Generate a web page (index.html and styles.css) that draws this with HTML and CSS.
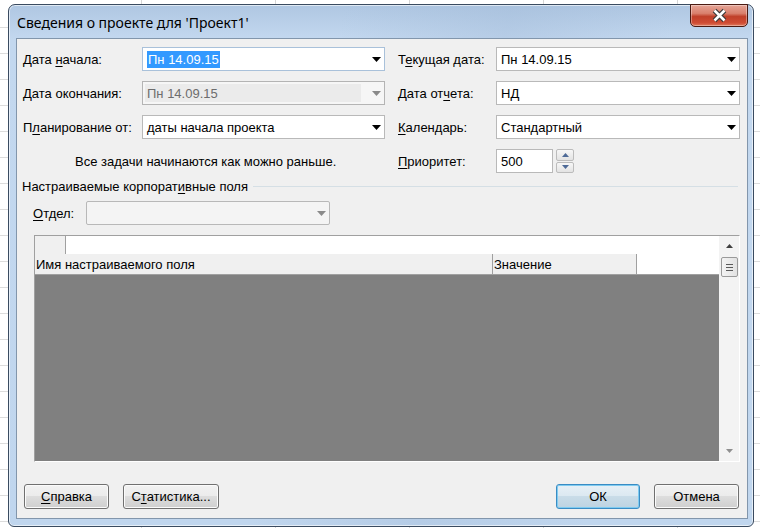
FILE: index.html
```html
<!DOCTYPE html>
<html lang="ru">
<head>
<meta charset="utf-8">
<title>Сведения о проекте</title>
<link rel="stylesheet" href="styles.css">
</head>
<body>
<div class="window">
  <div class="titlebar">
    <span class="title">Сведения о проекте для 'Проект1'</span>
    <button class="close" aria-label="Закрыть">
      <svg width="17" height="15" viewBox="0 0 17 15"><path d="M3.5 2.5 L13.5 12.5 M13.5 2.5 L3.5 12.5" stroke="#3a3a3a" stroke-width="5" fill="none"/><path d="M3.5 2.5 L13.5 12.5 M13.5 2.5 L3.5 12.5" stroke="#fff" stroke-width="2.6" fill="none"/></svg>
    </button>
  </div>
  <div class="client">
    <div class="fields">
      <span class="lbl"><span>Дата <u>н</u>ачала:</span></span>
      <div class="combo focus"><span class="val"><span class="sel">Пн 14.09.15</span></span><svg class="arr" width="9" height="5" viewBox="0 0 9 5"><path d="M0 0H9L4.5 5Z"/></svg></div>
      <span class="lbl lbl-r"><span>Т<u>е</u>кущая дата:</span></span>
      <div class="combo"><span class="val">Пн 14.09.15</span><svg class="arr" width="9" height="5" viewBox="0 0 9 5"><path d="M0 0H9L4.5 5Z"/></svg></div>

      <span class="lbl"><span><u>Д</u>ата окончания:</span></span>
      <div class="combo disabled"><span class="val">Пн 14.09.15</span><svg class="arr" width="9" height="5" viewBox="0 0 9 5"><path d="M0 0H9L4.5 5Z"/></svg></div>
      <span class="lbl lbl-r"><span>Дата от<u>ч</u>ета:</span></span>
      <div class="combo"><span class="val">НД</span><svg class="arr" width="9" height="5" viewBox="0 0 9 5"><path d="M0 0H9L4.5 5Z"/></svg></div>

      <span class="lbl"><span>П<u>л</u>анирование от:</span></span>
      <div class="combo"><span class="val">даты начала проекта</span><svg class="arr" width="9" height="5" viewBox="0 0 9 5"><path d="M0 0H9L4.5 5Z"/></svg></div>
      <span class="lbl lbl-r"><span><u>К</u>алендарь:</span></span>
      <div class="combo"><span class="val">Стандартный</span><svg class="arr" width="9" height="5" viewBox="0 0 9 5"><path d="M0 0H9L4.5 5Z"/></svg></div>

      <span class="note">Все задачи начинаются как можно раньше.</span>
      <span class="lbl lbl-r"><span><u>П</u>риоритет:</span></span>
      <div class="spin">
        <div class="spin-input">500</div>
        <div class="spin-btns">
          <span class="sb"><svg width="7" height="4" viewBox="0 0 7 4"><path d="M3.5 0L7 4H0Z"/></svg></span>
          <span class="sb"><svg width="7" height="4" viewBox="0 0 7 4"><path d="M0 0H7L3.5 4Z"/></svg></span>
        </div>
      </div>
    </div>

    <div class="group"><span>Настраиваемые корпорат<u>и</u>вные поля</span></div>

    <div class="dept">
      <span class="dept-lbl"><u>О</u>тдел:</span>
      <div class="combo dept-combo"><span class="val"></span><svg class="arr" width="9" height="5" viewBox="0 0 9 5"><path d="M0 0H9L4.5 5Z"/></svg></div>
    </div>

    <div class="table">
      <div class="tmain">
        <div class="trow1"><span class="corner"></span></div>
        <div class="thead">
          <span class="th th1">Имя настраиваемого поля</span>
          <span class="th th2">Значение</span>
        </div>
        <div class="tbody"></div>
      </div>
      <div class="vscroll">
        <span class="sarrow"><svg width="7" height="4" viewBox="0 0 7 4"><path d="M3.5 0L7 4H0Z"/></svg></span>
        <span class="thumb"><i></i><i></i><i></i></span>
        <span class="strack"></span>
        <span class="sarrow down"><svg width="7" height="4" viewBox="0 0 7 4"><path d="M0 0H7L3.5 4Z"/></svg></span>
      </div>
    </div>

    <div class="buttons">
      <button class="btn w85"><u>С</u>правка</button>
      <button class="btn w96">С<u>т</u>атистика...</button>
      <span class="spacer"></span>
      <button class="btn w84 default">ОК</button>
      <button class="btn w85">Отмена</button>
    </div>
  </div>
</div>
</body>
</html>
```

FILE: styles.css
```css
* { box-sizing: border-box; }
html, body { margin: 0; padding: 0; }
body {
  width: 760px;
  height: 528px;
  overflow: hidden;
  position: relative;
  font-family: "Liberation Sans", Arial, sans-serif;
  font-size: 13px;
  color: #000;
  background-color: #fff;
  background-image:
    repeating-linear-gradient(to right, transparent 0 133px, #d6d6d6 133px 134px),
    repeating-linear-gradient(to bottom, transparent 0 25px, #dcdcdc 25px 26px);
  background-position: 8px 0, 0 2px;
}

u { text-decoration: underline; text-underline-offset: 2px; }

.window {
  position: absolute;
  left: 8px;
  top: 4px;
  width: 746px;
  height: 523px;
  border: 1px solid #3a4b60;
  border-radius: 7px 7px 6px 6px;
  background:
    linear-gradient(100deg, rgba(255,255,255,0) 40%, rgba(160,185,215,.35) 60%, rgba(255,255,255,0) 80%),
    linear-gradient(to bottom, #afc7e2 0, #c3d8ef 34px, #c0d6ee 100%);
  box-shadow: inset 0 0 0 1px rgba(255,255,255,.6);
  padding: 0 5px 7px 7px;
  display: flex;
  flex-direction: column;
}

.titlebar {
  height: 33px;
  flex: none;
  display: flex;
  align-items: center;
  justify-content: space-between;
}
.title {
  font-family: "Noto Sans", "Open Sans", sans-serif;
  font-size: 14px;
  color: #000;
  padding-left: 1px;
  margin-top: 1px;
}
.close {
  align-self: flex-start;
  margin-top: -1px;
  width: 58px;
  height: 23px;
  padding: 0;
  border: 1px solid #4a1a12;
  border-radius: 0 0 5px 5px;
  background: linear-gradient(to bottom, #e6a597 0, #d9806d 40%, #c0402a 55%, #cf4c34 85%, #e07a5e 100%);
  box-shadow: inset 0 0 0 1px rgba(255,255,255,.35);
  display: flex;
  align-items: center;
  justify-content: center;
}

.client {
  flex: 1;
  background: #f0f0f0;
  border: 1px solid #8296ac;
  padding: 8px 7px 9px 6px;
  display: flex;
  flex-direction: column;
}

.fields {
  display: grid;
  grid-template-columns: 119px 243px 111px 244px;
  grid-auto-rows: 24px;
  row-gap: 10px;
}
.lbl {
  display: flex;
  align-items: center;
  white-space: nowrap;
}
.lbl-r { padding-left: 13px; }

.combo {
  display: flex;
  align-items: center;
  border: 1px solid #b9b9b9;
  background: #fff;
  padding: 0 3px 0 4px;
  white-space: nowrap;
}
.combo.focus { border-color: #a9c1da; }
.combo .val { flex: 1; }
.combo .arr { fill: #000; flex: none; margin-top: 1px; }
.sel {
  display: inline-block;
  background: #3399ff;
  color: #fff;
  line-height: 17px;
  padding: 0 1px;
}
.combo.disabled {
  background: #f6f6f6;
  border-color: #b4b4b4;
  padding: 2px 3px 2px 2px;
  align-items: stretch;
}
.combo.disabled .val {
  background: #ebebeb;
  color: #6d6d6d;
  padding-left: 2px;
  display: flex;
  align-items: center;
  margin-right: 11px;
}
.combo.disabled .arr { fill: #8a8a8a; align-self: center; }

.note {
  grid-column: 1 / 3;
  display: flex;
  align-items: center;
  padding-left: 52px;
  white-space: nowrap;
}

.spin { display: flex; gap: 3px; }
.spin-input {
  width: 57px;
  border: 1px solid #b9b9b9;
  background: #fff;
  display: flex;
  align-items: center;
  padding-left: 4px;
}
.spin-btns {
  width: 18px;
  display: flex;
  flex-direction: column;
  gap: 1px;
}
.sb {
  flex: 1;
  border: 1px solid #bcbcbc;
  border-radius: 2px;
  background: linear-gradient(to bottom, #f7f7f7, #e3e3e3);
  display: flex;
  align-items: center;
  justify-content: center;
}
.sb svg { fill: #4e6a97; }

.group {
  display: flex;
  align-items: center;
  gap: 5px;
  height: 16px;
  margin: 5px 0 0 -1px;
  white-space: nowrap;
}
.group::after {
  content: "";
  flex: 1;
  height: 1px;
  background: #d5dfe5;
  margin-right: 2px;
}

.dept {
  display: flex;
  align-items: center;
  margin-top: 7px;
  padding-left: 10px;
  height: 24px;
}
.dept-lbl { width: 53px; }
.dept-combo {
  width: 244px;
  height: 24px;
  background: #f4f4f4;
  border-color: #b8b8b8;
  border-radius: 2px;
}
.dept-combo .arr { fill: #8a8a8a; }

.table {
  margin: 10px 0 0 11px;
  width: 706px;
  height: 227px;
  border: 1px solid;
  border-color: #a0a0a0 #fff #fff #a0a0a0;
  display: flex;
}
.tmain {
  flex: 1;
  display: flex;
  flex-direction: column;
}
.trow1 {
  height: 18px;
  background: #fff;
  display: flex;
}
.corner {
  width: 31px;
  background: #f0f0f0;
  border-right: 1px solid #a0a0a0;
}
.thead {
  height: 21px;
  display: flex;
  background: #fff;
  border-bottom: 1px solid #a0a0a0;
}
.th {
  background: #f0f0f0;
  border-right: 1px solid #a0a0a0;
  padding-left: 1px;
  display: flex;
  align-items: center;
  white-space: nowrap;
}
.th1 { width: 458px; }
.th2 { width: 144px; }
.tbody {
  flex: 1;
  background: #808080;
}
.vscroll {
  width: 20px;
  background: #f3f3f3;
  display: flex;
  flex-direction: column;
  align-items: center;
}
.sarrow {
  height: 20px;
  display: flex;
  align-items: center;
  justify-content: center;
}
.sarrow svg { fill: #404040; }
.sarrow.down svg { fill: #8f8f8f; }
.thumb {
  margin-top: 1px;
  width: 17px;
  height: 20px;
  border: 1px solid #9a9a9a;
  border-radius: 2px;
  background: linear-gradient(to right, #f3f3f3, #e2e2e2);
  display: flex;
  flex-direction: column;
  align-items: center;
  justify-content: center;
  gap: 2px;
}
.thumb i {
  display: block;
  width: 7px;
  height: 1px;
  background: #5a5a5a;
}
.strack { flex: 1; }

.buttons {
  margin-top: auto;
  display: flex;
  gap: 14px;
  padding: 0 1px;
}
.spacer { flex: 1; }
.btn {
  height: 25px;
  padding: 0;
  font-family: "Liberation Sans", Arial, sans-serif;
  font-size: 13px;
  color: #000;
  border: 1px solid #707070;
  border-radius: 3px;
  background: linear-gradient(to bottom, #f2f2f2 0, #ebebeb 50%, #dddddd 50%, #cfcfcf 100%);
  box-shadow: inset 0 0 0 1px #fbfbfb;
}
.btn.default {
  border-color: #3a8cc4;
  background: linear-gradient(to bottom, #e7f0f6 0, #dbe8f1 50%, #c9dce8 50%, #bdd3e2 100%);
  box-shadow: inset 0 0 0 1px #7fcbf0;
}
.w84 { width: 84px; }
.w85 { width: 85px; }
.w96 { width: 96px; }
```
